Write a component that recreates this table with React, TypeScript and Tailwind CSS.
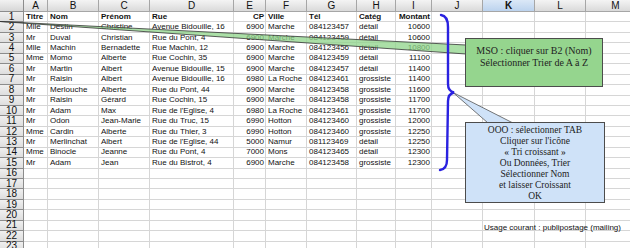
import React from 'react';

const cols = [
  { id: 'A', w: 'w-[24px]' },
  { id: 'B', w: 'w-[51px]' },
  { id: 'C', w: 'w-[51px]' },
  { id: 'D', w: 'w-[84px]' },
  { id: 'E', w: 'w-[32px]', right: true },
  { id: 'F', w: 'w-[41px]' },
  { id: 'G', w: 'w-[50px]' },
  { id: 'H', w: 'w-[39px]' },
  { id: 'I', w: 'w-[36px]', right: true },
  { id: 'J', w: 'w-[51px]' },
  { id: 'K', w: 'w-[52px]' },
  { id: 'L', w: 'w-[51px]' },
  { id: 'M', w: 'w-[60px]' },
];

const header = ['Titre', 'Nom', 'Prénom', 'Rue', 'CP', 'Ville', 'Tél', 'Catég', 'Montant'];

const data = [
  ['Mlle', 'Destin', 'Christine', 'Avenue Bidouille, 16', '6900', 'Marche', '084123457', 'détail', '10600'],
  ['Mr', 'Duval', 'Christian', 'Rue du Pont, 4', '6900', 'Marche', '084123459', 'détail', '10600'],
  ['Mlle', 'Machin', 'Bernadette', 'Rue Machin, 12', '6900', 'Marche', '084123456', 'détail', '10800'],
  ['Mme', 'Momo', 'Alberte', 'Rue Cochin, 35', '6900', 'Marche', '084123459', 'détail', '11100'],
  ['Mr', 'Martin', 'Albert', 'Avenue Bidouille, 15', '6900', 'Marche', '084123457', 'détail', '11400'],
  ['Mr', 'Raisin', 'Albert', 'Avenue Bidouille, 16', '6980', 'La Roche', '084123461', 'grossiste', '11400'],
  ['Mr', 'Merlouche', 'Alberte', 'Rue du Pont, 44', '6900', 'Marche', '084123458', 'grossiste', '11600'],
  ['Mr', 'Raisin', 'Gérard', 'Rue Cochin, 15', '6900', 'Marche', '084123458', 'grossiste', '11700'],
  ['Mr', 'Adam', 'Max', "Rue de l'Eglise, 4", '6980', 'La Roche', '084123461', 'grossiste', '11700'],
  ['Mr', 'Odon', 'Jean-Marie', 'Rue du Truc, 15', '6990', 'Hotton', '084123460', 'grossiste', '12000'],
  ['Mme', 'Cardin', 'Alberte', 'Rue du Thier, 3', '6990', 'Hotton', '084123460', 'grossiste', '12250'],
  ['Mr', 'Merlinchat', 'Albert', "Rue de l'Eglise, 44", '5000', 'Namur', '081123469', 'détail', '12250'],
  ['Mme', 'Binocle', 'Jeanne', 'Rue du Pont, 4', '7000', 'Mons', '084123465', 'détail', '12300'],
  ['Mr', 'Adam', 'Jean', 'Rue du Bistrot, 4', '6900', 'Marche', '084123458', 'grossiste', '12300'],
];

function rowCells(n: number): string[] {
  if (n === 1) return header;
  if (n >= 2 && n <= 15) return data[n - 2];
  return [];
}

export default function App() {
  const rows = Array.from({ length: 23 }, (_, i) => i + 1);

  return (
    <div className="relative w-[630px] h-[248px] overflow-hidden bg-white font-['Liberation_Sans',Arial,sans-serif] text-[#111]">
      {/* column headers */}
      <div className="flex h-[12px]">
        <div className="w-[24px] shrink-0 bg-gradient-to-b from-[#f2f2f2] to-[#d6d6d6] border-r border-b border-[#8c8c8c]" />
        {cols.map(c => (
          <div
            key={c.id}
            className={`${c.w} shrink-0 flex items-center justify-center text-[10px] leading-none border-r border-b border-[#a6a6a6] ${
              c.id === 'K'
                ? 'bg-gradient-to-b from-[#dbe8f7] to-[#bcd3ee] font-bold'
                : 'bg-gradient-to-b from-[#f4f4f4] to-[#dadada]'
            }`}
          >
            {c.id}
          </div>
        ))}
      </div>

      {/* rows */}
      {rows.map(n => {
        const cells = rowCells(n);
        return (
          <div key={n} className="flex h-[10.45px]">
            <div className="w-[24px] shrink-0 flex items-center justify-center text-[10px] leading-none bg-gradient-to-b from-[#f0f0f0] to-[#dedede] border-r border-b border-[#8c8c8c]">
              {n}
            </div>
            {cols.map((c, i) => {
              const txt = cells[i] ?? '';
              return (
                <div
                  key={c.id}
                  className={`${c.w} shrink-0 flex items-center overflow-hidden whitespace-nowrap text-[8px] leading-none border-r border-b border-[#d6d6d6] ${
                    c.right ? 'justify-end pr-[1px]' : 'pl-[2px]'
                  } ${n === 1 ? 'font-bold' : ''}`}
                >
                  {txt}
                </div>
              );
            })}
          </div>
        );
      })}

      {/* note in K21 */}
      <div className="absolute left-[484px] top-[222.5px] h-[10px] flex items-center text-[8px] leading-none whitespace-nowrap">
        Usage courant : publipostage (mailing)
      </div>

      {/* drawing layer: pointers and brace */}
      <svg className="absolute inset-0 pointer-events-none" width="630" height="248" viewBox="0 0 630 248">
        <polygon points="0,21.5 466,45 466,54" fill="#8fd48a" fillOpacity="0.75" stroke="#333" strokeWidth="0.8" />
        <polygon points="453,92.5 488,123 513,123" fill="#cfe2f8" stroke="#555" strokeWidth="0.8" />
        <path
          d="M441 15 Q448 16 448 27 L448 84 Q448 91 454 92.5 Q448 94 448 101 L447 160 Q447 169 440 170"
          fill="none"
          stroke="#2a22e0"
          strokeWidth="2.4"
          strokeLinecap="round"
        />
      </svg>

      {/* green callout */}
      <div className="absolute left-[465px] top-[38px] w-[138px] h-[49px] bg-[#95d58e] border border-[#4c4c4c] pt-[6px] text-center font-['Liberation_Serif','Times_New_Roman',serif] text-[10px] leading-[12px] text-[#222]">
        <div>MSO : cliquer sur B2 (Nom)</div>
        <div>Sélectionner Trier de A à Z</div>
      </div>

      {/* blue callout */}
      <div className="absolute left-[465px] top-[122px] w-[140px] h-[81px] bg-[#cfe2f8] border border-[#4c4c4c] pt-[2px] text-center font-['Liberation_Serif','Times_New_Roman',serif] text-[9.5px] leading-[11px] text-[#222]">
        <div>OOO : sélectionner TAB</div>
        <div>Cliquer sur l'icône</div>
        <div>« Tri croissant »</div>
        <div>Ou Données, Trier</div>
        <div>Sélectionner Nom</div>
        <div>et laisser Croissant</div>
        <div>OK</div>
      </div>
    </div>
  );
}
